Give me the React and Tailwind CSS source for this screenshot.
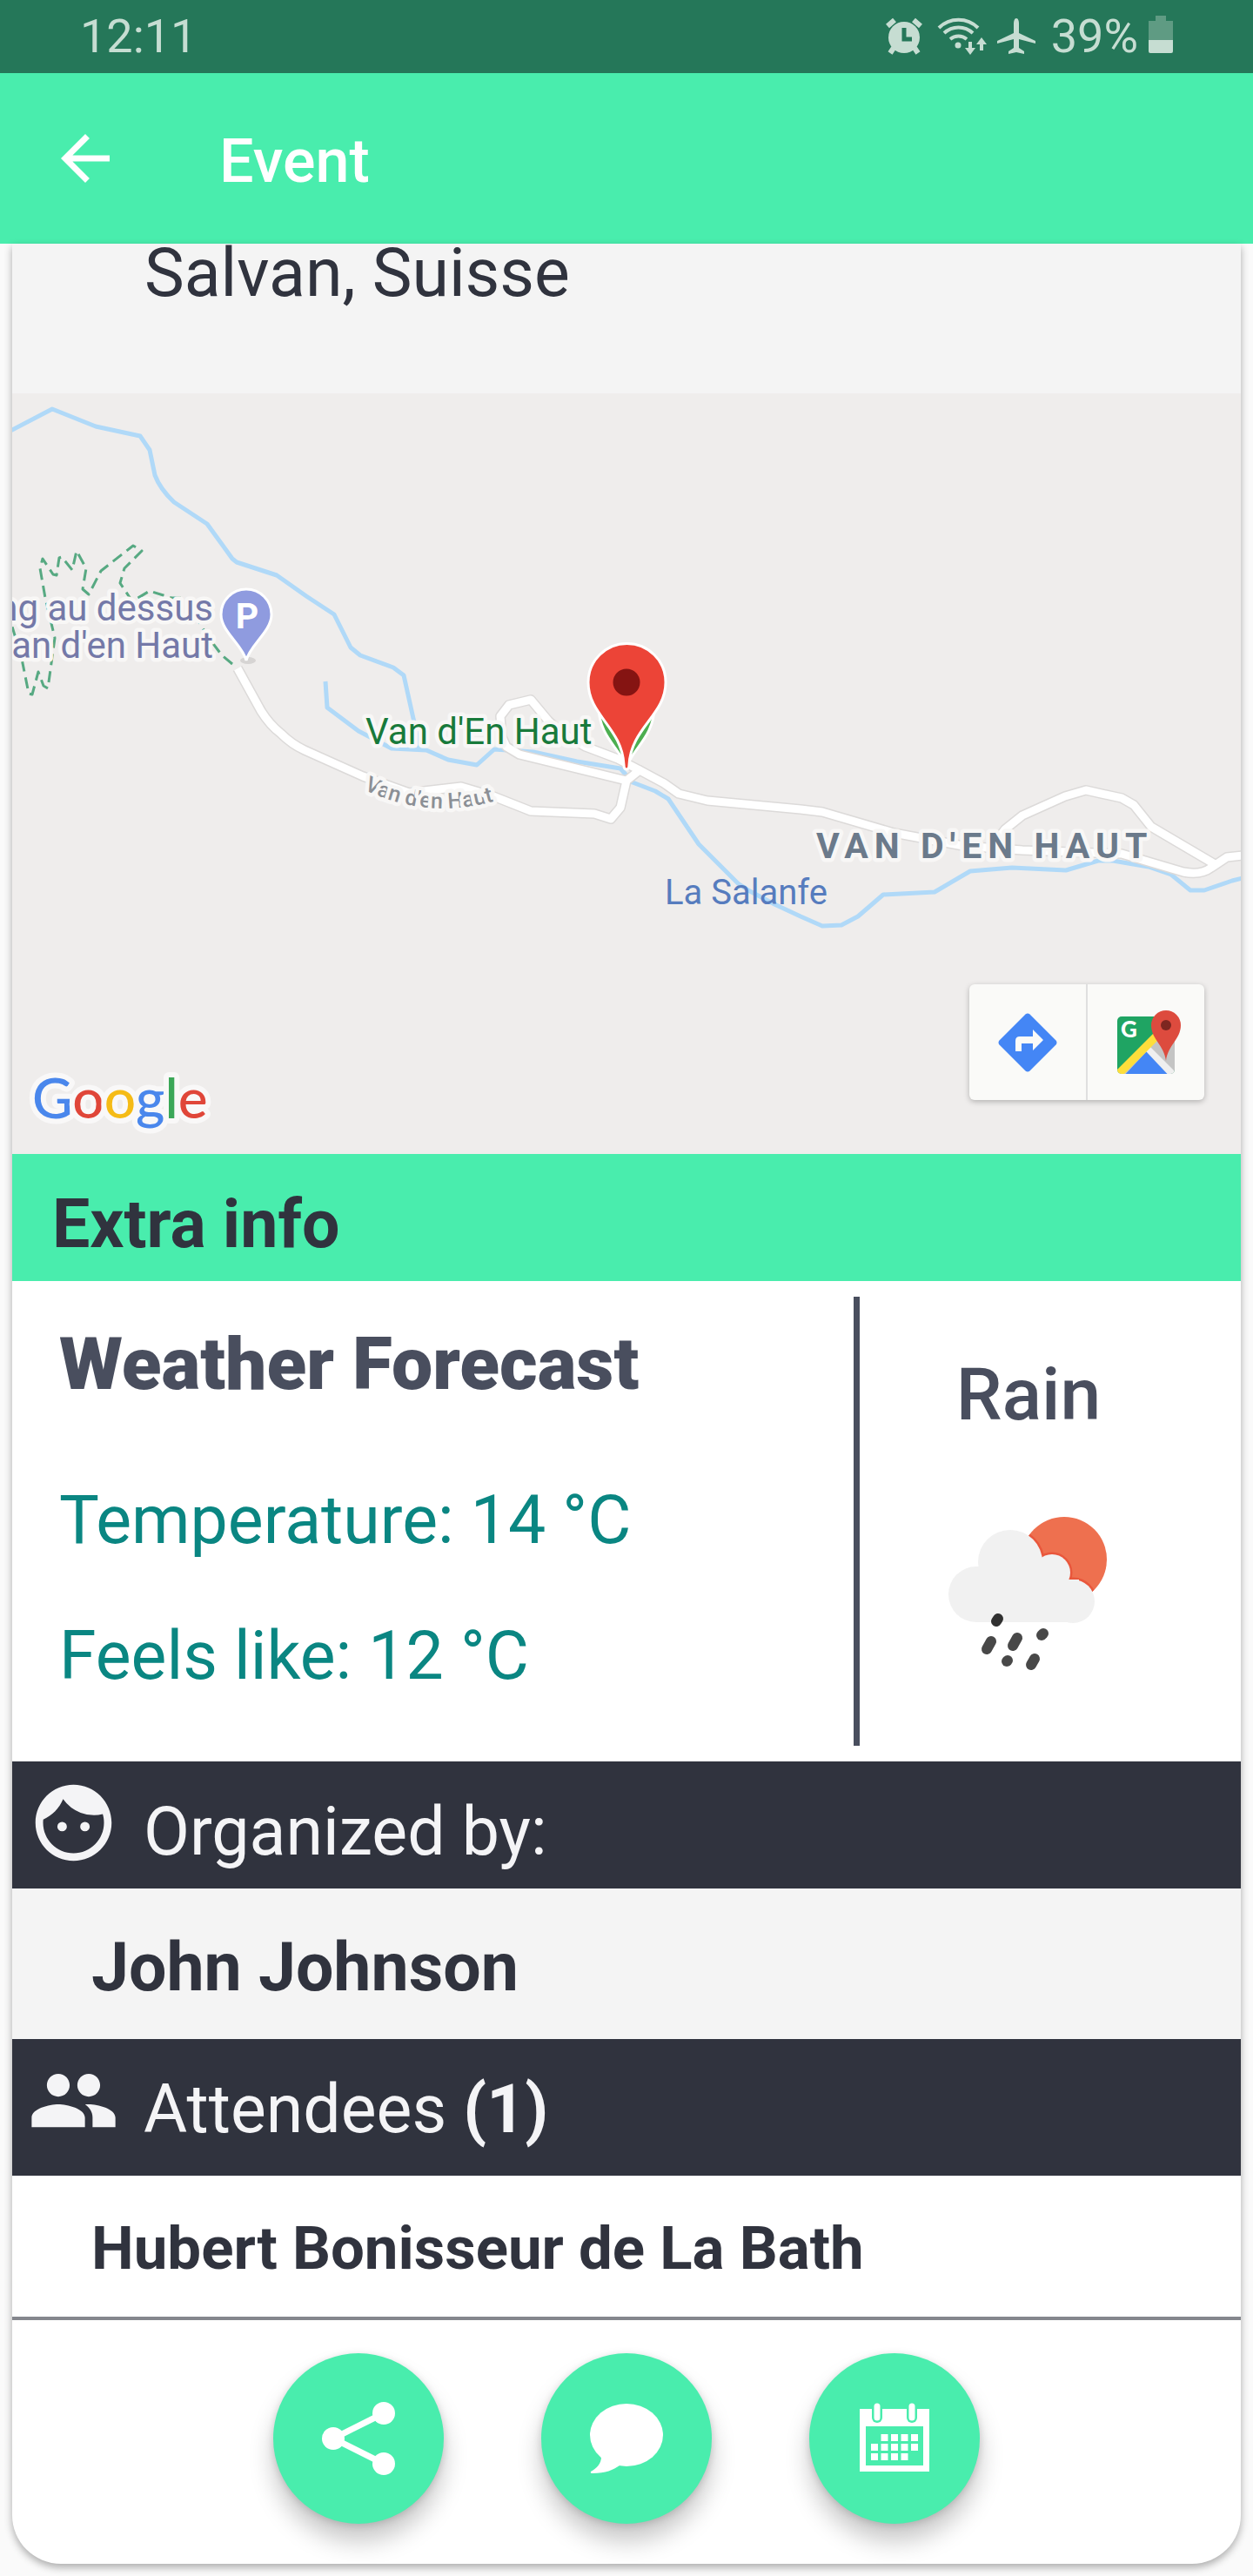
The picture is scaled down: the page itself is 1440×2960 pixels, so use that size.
import React from "react";
import { MdArrowBack, MdFace, MdPeople } from "react-icons/md";

function StatusIcons() {
  return (
    <svg viewBox="1010 16 180 50" className="h-[50px] w-[180px]" fill="#c6ddd2" aria-hidden="true">
      {/* alarm clock */}
      <ellipse cx="1037" cy="42" rx="18" ry="18" />
      <path d="M1018 29l8-7M1056 29l-8-7M1025 54l-4 6M1049 54l4 6" stroke="#c6ddd2" strokeWidth="6" />
      <path d="M1037 31v13h9" fill="none" stroke="#257759" strokeWidth="5" />
      {/* wifi */}
      <g fill="none" stroke="#c6ddd2" strokeWidth="4">
        <path d="M1077 31a32 32 0 0 1 45 0" />
        <path d="M1083 37a24 24 0 0 1 33 0" />
        <path d="M1090 44a15 15 0 0 1 19 0" />
      </g>
      <circle cx="1099" cy="51" r="3.5" />
      <path d="M1111 47h4v7h4l-6 8-6-8h4zM1124 57h4v-7h4l-6-8-6 8h4z" />
      {/* plane */}
      <path d="M1166 20c2 0 3 3 3 6v11l19 9v3l-19-5v10l6 4v3l-9-2-9 2v-3l6-4v-10l-19 5v-3l19-9V26c0-3 1-6 3-6z" />
    </svg>
  );
}

function Battery() {
  return (
    <svg viewBox="0 0 28 44" className="h-[44px] w-[28px]" aria-hidden="true">
      <path d="M8 0h12v6h8v22H0V6h8z" fill="#5f9b83" />
      <path d="M0 28h28v13q0 2-2 2H2q-2 0-2-2z" fill="#c6ddd2" />
    </svg>
  );
}

const roads = [
  "M273 768L300 817Q310 833 323 843Q335 855 350 862L417 892L470 911L530 904L567 915L610 932L683 935L702 941L713 928L720 897L735 885L763 900L780 912L813 920L920 930L945 933L1027 957L1107 972L1175 977L1289 981L1360 1002Q1380 1006 1392 997L1410 985L1428 983",
  "M735 885L710 872L673 858L645 842L630 828L610 804L585 810L575 823L577 847L582 858L597 867L720 897",
  "M1396 993L1323 950L1303 925L1289 917L1248 908L1224 915L1175 937L1155 953L1141 972",
];

const rivers = [
  "M12 495L60 470L110 490L161 501L172 517L178 546Q184 562 200 577L238 602L267 642L272 646L318 661L352 685L384 706L403 744L414 753L452 767L464 776L476 830L482 861",
  "M374 783L376 813L412 840L450 860L490 862L515 873L548 879L568 861L613 864L663 875L713 883L727 899L753 909L768 918L803 970L848 1015L860 1023L890 1039L920 1053L945 1064L967 1063L986 1053L1015 1028L1074 1025L1115 1001L1163 997L1225 1000L1262 989L1279 989L1320 996L1346 1005L1368 1023L1384 1023L1416 1012L1428 1009",
];

const trail =
  "M267 763L255 753L240 733L230 717L215 687L197 687L172 679L152 691L138 670L143 653L163 633L153 627L116 656L102 683L95 677L99 653L88 633L83 655L71 640L68 641L65 661L61 660L49 642L46 653L52 687L63 733L55 791L50 788L44 772L37 798L33 797L25 757L14 720";

function MapDrawing() {
  return (
    <svg
      viewBox="14 452 1412 874"
      className="block h-full w-full"
      role="img"
      aria-label="Map of Van d'en Haut"
      fontFamily="Roboto, sans-serif"
    >
      <rect x="14" y="452" width="1412" height="874" fill="#efedec" />
      <g fill="none" strokeLinejoin="round">
        {rivers.map((d) => (
          <path key={d} d={d} stroke="#b0d9f8" strokeWidth="5" />
        ))}
        <path d={trail} stroke="#57a982" strokeWidth="3" strokeDasharray="13 7" />
        {roads.map((d) => (
          <path key={d} d={d} stroke="#dcdad9" strokeWidth="12" />
        ))}
        {roads.map((d) => (
          <path key={d} d={d} stroke="#ffffff" strokeWidth="9" />
        ))}
      </g>
      <path id="street" d="M418 907Q490 942 566 921" fill="none" />
      <g stroke="#f8f7f6" strokeWidth="9" strokeLinejoin="round" paintOrder="stroke">
        <text x="245" y="713" textAnchor="end" fontSize="42" fill="#7479a8">ng au dessus</text>
        <text x="245" y="756" textAnchor="end" fontSize="42" fill="#7479a8">an d'en Haut</text>
        <text x="420" y="855" fontSize="42" fill="#187a3b">Van d'En Haut</text>
        <text x="938" y="986" fontSize="41" fontWeight="700" letterSpacing="7" fill="#6b7a8b">VAN D'EN HAUT</text>
        <text fontSize="25" fontWeight="500" fill="#8b8f95">
          <textPath href="#street">Van d'en Haut</textPath>
        </text>
      </g>
      <text x="764" y="1039" fontSize="40" fill="#567cbe">La Salanfe</text>

      <ellipse cx="285" cy="759" rx="9" ry="4" fill="#d6d4d3" />
      <path
        d="M283 759C279 741 254 726 254 706A29 29 0 0 1 312 706C312 726 287 741 283 759z"
        fill="#8f9bdf"
        stroke="#ffffff"
        strokeWidth="3"
      />
      <text x="284" y="722" textAnchor="middle" fontSize="41" fontWeight="700" fill="#ffffff">P</text>

      <path
        d="M720 884C716 862 688 848 688 812A32 32 0 0 1 752 812C752 848 724 862 720 884z"
        fill="#4caf50"
        stroke="#ffffff"
        strokeWidth="3"
      />
      <path
        d="M720 884Q717 884 717 879C715 836 676 822 676 784A44 44 0 0 1 765 784C765 822 725 836 723 879Q723 884 720 884z"
        fill="#ec4437"
        stroke="#ffffff"
        strokeWidth="3"
      />
      <circle cx="720" cy="784" r="15.5" fill="#851412" />

      <text
        x="37"
        y="1285"
        fontFamily="Lato, sans-serif"
        fontSize="64"
        fontWeight="500"
        stroke="#f9f8f8"
        strokeWidth="12"
        strokeLinejoin="round"
        paintOrder="stroke"
      >
        <tspan fill="#4a87ec">G</tspan>
        <tspan fill="#e04639">o</tspan>
        <tspan fill="#f5bb16">o</tspan>
        <tspan fill="#4a87ec">g</tspan>
        <tspan fill="#3ba758">l</tspan>
        <tspan fill="#e04639">e</tspan>
      </text>
    </svg>
  );
}

function DirectionsIcon() {
  return (
    <svg viewBox="0 0 68 68" className="size-[68px]" aria-hidden="true">
      <path d="M31.500 1.500q2.500-2 5 0l30 30q2 2.500 0 5l-30 30q-2.500 2-5 0l-30-30q-2-2.500 0-5z" fill="#4486f5" />
      <path d="M20 44V32q0-5 5-5h15v-8l12 12-12 12v-8H27v9z" fill="#fafaf8" />
    </svg>
  );
}

function MapsIcon() {
  return (
    <svg viewBox="0 0 74 74" className="size-[74px]" aria-hidden="true">
      <clipPath id="tile">
        <rect x="0" y="7" width="66" height="66" rx="5" />
      </clipPath>
      <g clipPath="url(#tile)">
        <rect y="7" width="66" height="66" fill="#1fa463" />
        <path d="M66 7V73H0z" fill="#c4c4c4" />
        <path d="M5 78L34 47L66 80z" fill="#4486f5" />
        <path d="M33 47l5-5 32 32-6 6z" fill="#efefef" />
        <path d="M-3 71L42 26l5 8L3 78z" fill="#fdde3b" />
      </g>
      <text x="4" y="31" fontFamily="Lato, sans-serif" fontSize="26" fontWeight="900" fill="#ffffff">G</text>
      <path d="M56 58C54 40 39 33 39 17A17 17 0 0 1 73 17C73 33 58 40 56 58z" fill="#dd4b3e" />
      <circle cx="56" cy="17" r="6" fill="#7d2620" />
    </svg>
  );
}

function CloudShapes() {
  return (
    <>
      <circle cx="1122" cy="1832" r="32" />
      <circle cx="1161" cy="1795" r="37" />
      <circle cx="1209" cy="1807" r="21" />
      <circle cx="1233" cy="1840" r="25" />
      <rect x="1122" y="1830" width="111" height="34" />
    </>
  );
}

function RainIcon() {
  return (
    <svg viewBox="1082 1738 200 186" className="h-[186px] w-[200px]" role="img" aria-label="Rain with sun behind a cloud">
      <clipPath id="sun">
        <circle cx="1223" cy="1792" r="49" />
      </clipPath>
      <circle cx="1223" cy="1792" r="49" fill="#ee704f" />
      <g clipPath="url(#sun)" stroke="#e9573c" strokeWidth="5">
        <CloudShapes />
      </g>
      <g fill="#f1f1f1">
        <CloudShapes />
        <path d="M1122 1800H1180V1790H1215V1815H1240V1850H1122z" />
      </g>
      <g stroke="#484848" strokeWidth="12" strokeLinecap="round">
        <path d="M1147 1860l-2 3" stroke="#303030" />
        <path d="M1139 1886l-5 9" />
        <path d="M1169 1882l-5 9" />
        <path d="M1199 1877l-2 2" />
        <path d="M1158 1908l-1 1" />
        <path d="M1189 1906l-4 7" />
      </g>
    </svg>
  );
}

function ShareIcon() {
  return (
    <svg viewBox="0 0 84 84" className="size-[84px]" fill="#ffffff" aria-hidden="true">
      <path d="M71 13L13 42L71 71" fill="none" stroke="#ffffff" strokeWidth="7" />
      <circle cx="71" cy="13" r="13" />
      <circle cx="13" cy="42" r="13" />
      <circle cx="71" cy="71" r="13" />
    </svg>
  );
}

function ChatIcon() {
  return (
    <svg viewBox="0 0 84 84" className="size-[84px]" fill="#ffffff" aria-hidden="true">
      <ellipse cx="42" cy="38" rx="42" ry="36" />
      <path d="M13 63C13 71 8 76 1 80Q0 82 3 82C18 82 27 78 34 73z" />
    </svg>
  );
}

const calendarCells = [
  [1, 0], [2, 0], [3, 0], [4, 0],
  [0, 1], [1, 1], [2, 1], [3, 1], [4, 1],
  [0, 2], [1, 2], [2, 2], [3, 2],
];

function CalendarIcon() {
  return (
    <svg viewBox="0 0 84 84" className="size-[84px]" fill="#ffffff" aria-hidden="true">
      <path fillRule="evenodd" d="M2 8H82V80H2zM9 28V73H75V28z" />
      {[22, 62].map((x) => (
        <g key={x} strokeLinecap="round">
          <path d={`M${x} 8V18`} stroke="#49edad" strokeWidth="12" />
          <path d={`M${x} 5V18`} stroke="#ffffff" strokeWidth="7" />
        </g>
      ))}
      {calendarCells.map(([c, r]) => (
        <rect key={`${c}-${r}`} x={15 + c * 11.5} y={37 + r * 11} width="8" height="8" />
      ))}
    </svg>
  );
}

function RoundButton({ label, children }) {
  return (
    <button
      type="button"
      aria-label={label}
      className="flex size-[196px] items-center justify-center rounded-full bg-[#49edad] shadow-[0_20px_28px_rgba(0,0,0,0.22),0_2px_8px_rgba(0,0,0,0.14)]"
    >
      {children}
    </button>
  );
}

export default function App() {
  return (
    <div className="bg-[#fafafa] pb-[14px] font-[Roboto,sans-serif] text-[#30333e]">
      <div className="flex h-[84px] items-center bg-[#257759] px-[92px] text-[54px] leading-[64px] text-[#c6ddd2]">
        <span className="flex-1">12:11</span>
        <StatusIcons />
        <span className="ml-4">39%</span>
        <div className="ml-3 -mt-1">
          <Battery />
        </div>
      </div>

      <header className="flex h-[196px] items-center bg-[#49edad] pl-[56px] text-white">
        <button type="button" aria-label="Back">
          <MdArrowBack className="size-[84px]" />
        </button>
        <h1 className="ml-[112px] pt-[6px] text-[70px] leading-[84px] font-medium">Event</h1>
      </header>

      <main className="mx-[14px] rounded-b-[56px] bg-white shadow-[0_4px_10px_rgba(0,0,0,0.32)]">
        <p className="bg-[#f4f4f4] pb-[104px] pl-[152px] text-[77px] leading-[68px]">Salvan, Suisse</p>

        <section className="relative aspect-[1412/874] w-full">
          <MapDrawing />
          <div className="absolute right-[42px] bottom-[62px] flex h-[133px] divide-x-2 divide-[#dfdfdf] rounded-md bg-[#fafaf8] shadow-[0_2px_6px_rgba(0,0,0,0.25)]">
            <button type="button" aria-label="Directions" className="flex w-[136px] items-center justify-center">
              <DirectionsIcon />
            </button>
            <button type="button" aria-label="Open in Google Maps" className="flex w-[134px] items-center justify-center pl-[8px]">
              <MapsIcon />
            </button>
          </div>
        </section>

        <h2 className="bg-[#49edad] pt-[35px] pb-[19px] pl-[46px] text-[77px] leading-[92px] font-bold">Extra info</h2>

        <section className="flex h-[552px] py-[18px]">
          <div className="flex-1 pt-[28px] pl-[54px]">
            <h3 className="text-[84px] leading-[100px] font-black text-[#494e5e]">Weather Forecast</h3>
            <p className="mt-[83px] text-[77px] leading-[92px] text-[#0a8682]">Temperature: 14 °C</p>
            <p className="mt-[64px] text-[77px] leading-[92px] text-[#0a8682]">Feels like: 12 °C</p>
          </div>
          <div className="w-[7px] bg-[#494e5e]" />
          <div className="flex w-[438px] flex-col items-center pt-[63px] pr-[50px]">
            <p className="text-[84px] leading-[100px] font-medium text-[#494e5e]">Rain</p>
            <div className="mt-[85px]">
              <RainIcon />
            </div>
          </div>
        </section>

        <h2 className="flex items-start bg-[#30333e] pt-[18px] pb-[19px] pl-[18px] text-[77px] leading-[92px] text-[#f4f4f6]">
          <MdFace className="size-[105px]" />
          <span className="ml-[28px] pt-[17px]">Organized by:</span>
        </h2>
        <p className="bg-[#f4f4f4] pt-[45px] pb-[36px] pl-[91px] text-[77px] leading-[92px] font-bold">John Johnson</p>

        <h2 className="flex items-start bg-[#30333e] pt-[18px] pb-[30px] pl-[18px] text-[77px] leading-[92px] text-[#f4f4f6]">
          <MdPeople className="size-[105px]" />
          <span className="ml-[28px] pt-[17px]">
            Attendees <b className="font-bold">(1)</b>
          </span>
        </h2>
        <p className="border-b-4 border-[#85878d] pt-[42px] pb-[36px] pl-[91px] text-[69px] leading-[84px] font-bold">
          Hubert Bonisseur de La Bath
        </p>

        <div className="flex justify-center gap-[112px] pt-[38px] pb-[46px]">
          <RoundButton label="Share">
            <ShareIcon />
          </RoundButton>
          <RoundButton label="Chat">
            <ChatIcon />
          </RoundButton>
          <RoundButton label="Add to calendar">
            <CalendarIcon />
          </RoundButton>
        </div>
      </main>
    </div>
  );
}
